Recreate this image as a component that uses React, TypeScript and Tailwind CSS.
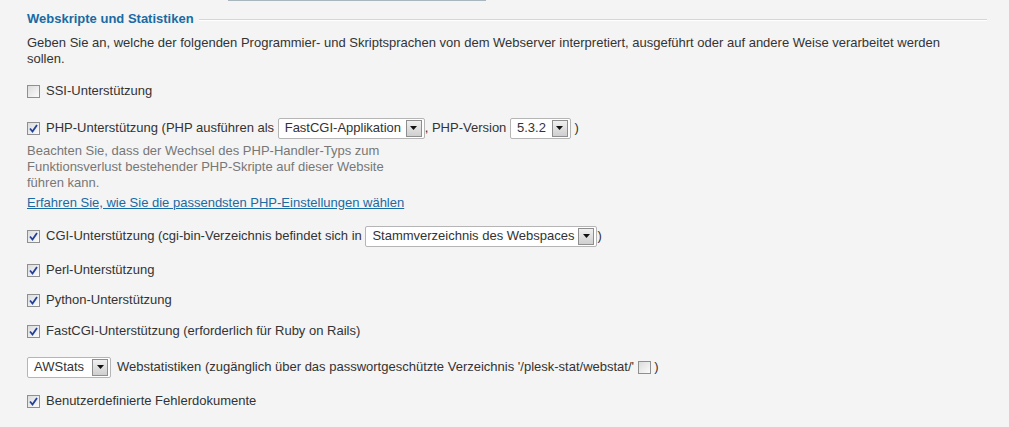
const Check = ({ checked }: { checked?: boolean }) => (
  <span className="inline-flex h-[13px] w-[13px] shrink-0 items-center justify-center border border-[#8f8f8f] bg-gradient-to-br from-[#dcdcdc] to-[#fbfbfb]">
    {checked && (
      <svg width="9" height="9" viewBox="0 0 9 9">
        <path d="M1 4.5 L3.5 7.5 L8 1" fill="none" stroke="#21409a" strokeWidth="1.8" />
      </svg>
    )}
  </span>
);

const Select = ({ value, width }: { value: string; width: string }) => (
  <span className={`inline-flex h-[21px] items-center justify-between gap-[4px] rounded-[2px] border border-[#b5b5b5] bg-white pl-[6px] pr-[2px] ${width}`}>
    <span className="whitespace-nowrap">{value}</span>
    <span className="flex h-[17px] w-[16px] shrink-0 items-center justify-center border border-[#8e8e8e] bg-gradient-to-b from-[#f0f0f0] to-[#cfcfcf]">
      <svg width="7" height="4" viewBox="0 0 7 4">
        <path d="M0 0 H7 L3.5 4 Z" fill="#111" />
      </svg>
    </span>
  </span>
);

const Row = ({ className, children }: { className: string; children: React.ReactNode }) => (
  <div className={`flex h-[20px] items-center ${className}`}>{children}</div>
);

export default function App() {
  return (
    <div className="h-[427px] w-[1009px] overflow-hidden bg-[#f4f4f4] text-[13px] leading-[16px] text-[#333] font-['Liberation_Sans',Arial,sans-serif]">
      <div className="ml-[228px] h-px w-[258px] bg-[#a9b6bd]" />
      <div className="pl-[27px] pr-[22px]">
        <div className="mt-[10px] flex items-center">
          <span className="font-bold text-[#1a6aa3]">Webskripte und Statistiken</span>
          <span className="ml-[5px] mt-[1px] h-[2px] flex-1 border-t border-[#d6d6d6] bg-white" />
        </div>
        <p className="mt-[8px] pr-[20px]">
          Geben Sie an, welche der folgenden Programmier- und Skriptsprachen von dem Webserver interpretiert, ausgeführt oder auf andere Weise verarbeitet werden sollen.
        </p>

        <Row className="mt-[14px]">
          <Check />
          <span className="ml-[6px]">SSI-Unterstützung</span>
        </Row>

        <Row className="mt-[17px]">
          <Check checked />
          <span className="ml-[6px]">PHP-Unterstützung (PHP ausführen als&nbsp;</span>
          <Select value="FastCGI-Applikation" width="w-[147px]" />
          <span>, PHP-Version&nbsp;</span>
          <Select value="5.3.2" width="w-[61px]" />
          <span>&nbsp;)</span>
        </Row>

        <p className="mt-[5px] w-[370px] text-[#777]">
          Beachten Sie, dass der Wechsel des PHP-Handler-Typs zum Funktionsverlust bestehender PHP-Skripte auf dieser Website führen kann.
        </p>
        <a href="#" className="mt-[4px] block w-fit text-[#1a6aa3] underline">
          Erfahren Sie, wie Sie die passendsten PHP-Einstellungen wählen
        </a>

        <Row className="mt-[15px]">
          <Check checked />
          <span className="ml-[6px]">CGI-Unterstützung (cgi-bin-Verzeichnis befindet sich in&nbsp;</span>
          <Select value="Stammverzeichnis des Webspaces" width="w-auto" />
          <span>)</span>
        </Row>

        <Row className="mt-[14px]">
          <Check checked />
          <span className="ml-[6px]">Perl-Unterstützung</span>
        </Row>

        <Row className="mt-[10px]">
          <Check checked />
          <span className="ml-[6px]">Python-Unterstützung</span>
        </Row>

        <Row className="mt-[11px]">
          <Check checked />
          <span className="ml-[6px]">FastCGI-Unterstützung (erforderlich für Ruby on Rails)</span>
        </Row>

        <Row className="mt-[16px]">
          <Select value="AWStats" width="w-[84px]" />
          <span className="ml-[6px]">Webstatistiken (zugänglich über das passwortgeschützte Verzeichnis '/plesk-stat/webstat/'&nbsp;</span>
          <Check />
          <span>&nbsp;)</span>
        </Row>

        <Row className="mt-[14px]">
          <Check checked />
          <span className="ml-[6px]">Benutzerdefinierte Fehlerdokumente</span>
        </Row>
      </div>
    </div>
  );
}
